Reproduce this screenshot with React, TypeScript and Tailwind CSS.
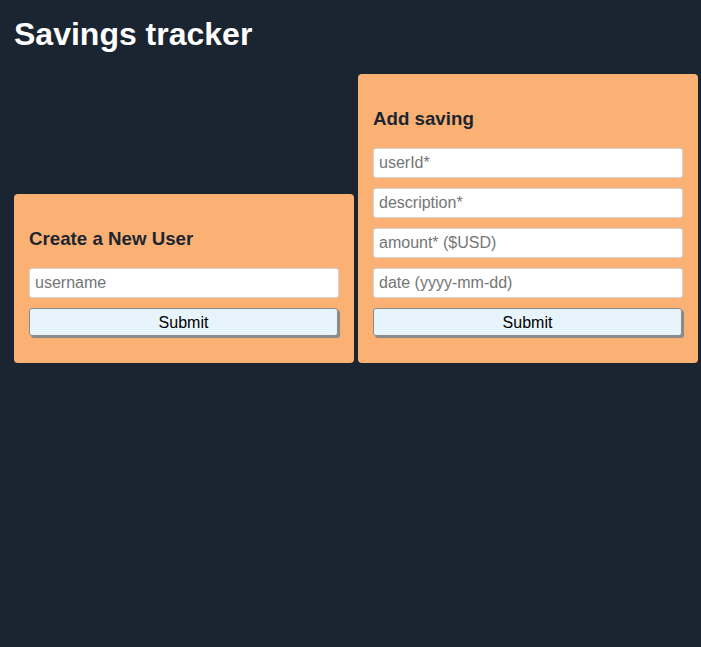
import React from "react";

const font = { fontFamily: '"Liberation Sans", Arial, Helvetica, sans-serif' };

function Field({ placeholder }: { placeholder: string }) {
  return (
    <input
      placeholder={placeholder}
      className="block w-full h-[30px] mb-[10px] px-[5px] bg-white border border-[#d4d4d4] rounded-[3px] text-[16px] text-black placeholder:text-[#757575] outline-none"
    />
  );
}

function SubmitButton() {
  return (
    <button className="block w-[309px] h-[28px] mb-[12px] pt-[1px] bg-[#e8f4fc] border border-[#8a8a8a] rounded-[3px] shadow-[2px_2px_0_#8a8a8a] text-[16px] text-black leading-[25px] text-center">
      Submit
    </button>
  );
}

function Card({ title, fields }: { title: string; fields: string[] }) {
  return (
    <div className="w-[340px] bg-[#fbb173] rounded-[4px] px-[15px] pt-[15px] pb-[15px]">
      <h3 className="text-[18.72px] leading-[21.5px] font-bold text-[#1b2531] my-[18.72px]">{title}</h3>
      {fields.map((f) => (
        <Field key={f} placeholder={f} />
      ))}
      <SubmitButton />
    </div>
  );
}

export default function App() {
  return (
    <div style={font} className="w-[701px] h-[647px] bg-[#1b2531] pl-[14px] pt-[16px]">
      <h1 className="text-[32px] leading-[37px] font-bold text-white m-0">Savings tracker</h1>
      <div className="flex items-end gap-[4px] mt-[21px]">
        <Card title="Create a New User" fields={["username"]} />
        <Card title="Add saving" fields={["userId*", "description*", "amount* ($USD)", "date (yyyy-mm-dd)"]} />
      </div>
    </div>
  );
}
